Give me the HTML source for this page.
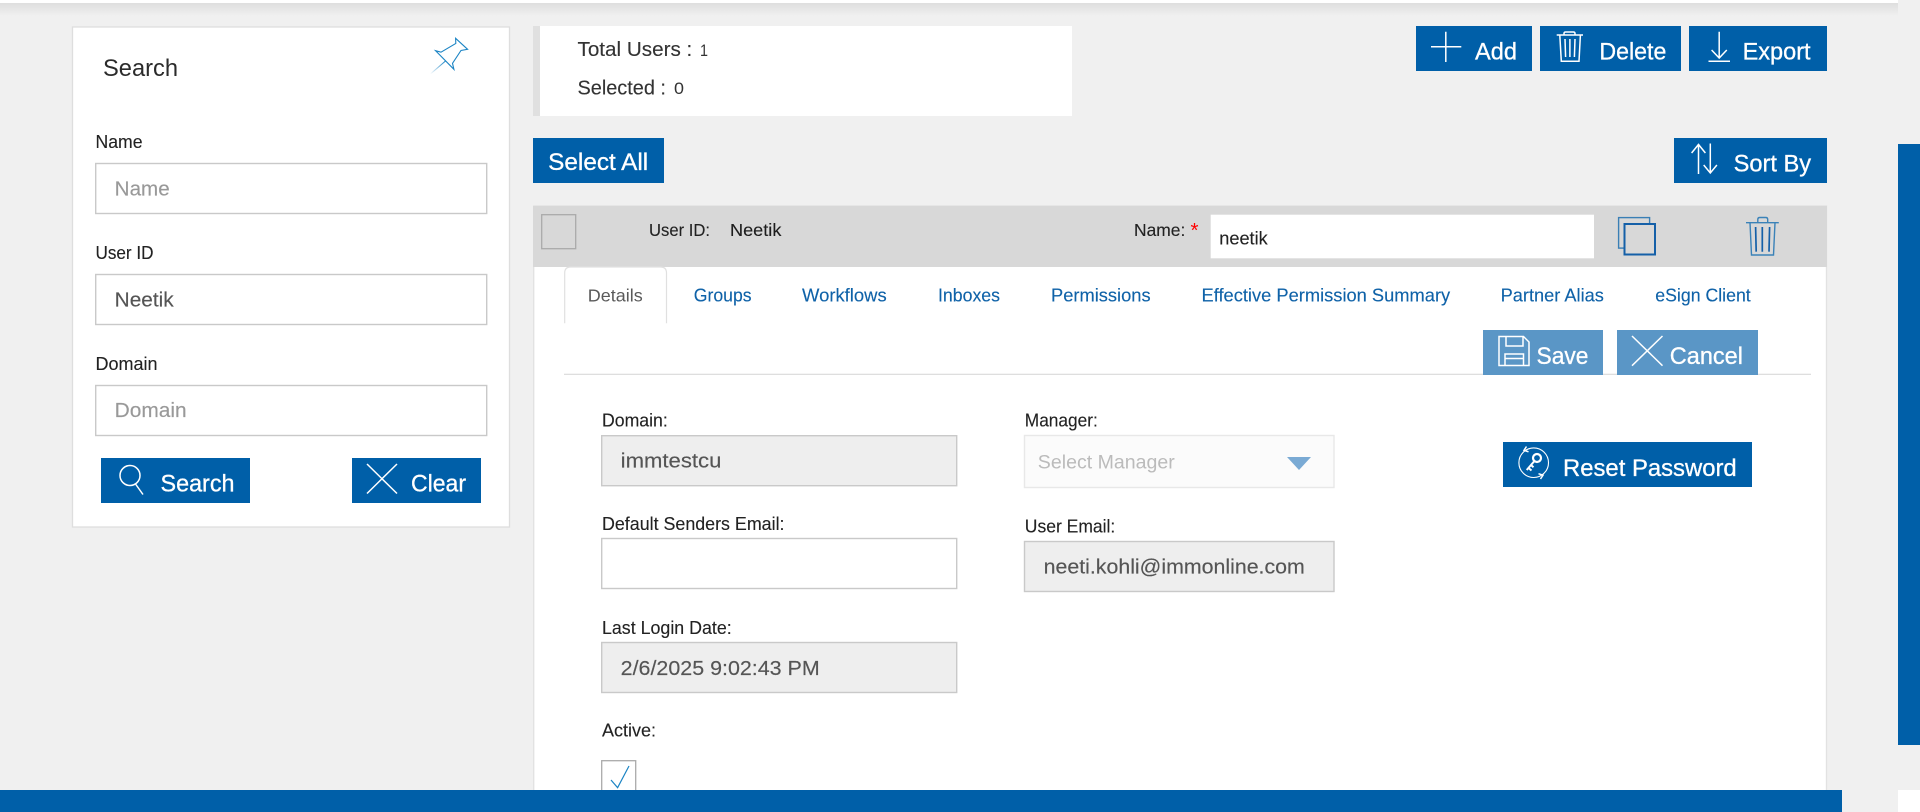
<!DOCTYPE html>
<html lang="en">
<head>
<meta charset="utf-8">
<title>Users</title>
<style>
html,body{margin:0;padding:0;width:1920px;height:812px;overflow:hidden;background:#f0f0f0}
svg{display:block}
text{font-family:"Liberation Sans",Arial,sans-serif;white-space:pre}
.l{font-size:18px;fill:#222;stroke:#222;stroke-width:.12}
.v{font-size:20px;fill:#555;stroke:#555;stroke-width:.15}
.ph{font-size:20px;fill:#999;stroke:#999;stroke-width:.15}
.b{font-size:24px;fill:#fff;stroke:#fff;stroke-width:.3}
.t{font-size:18px;fill:#0f62a8;stroke:#0f62a8;stroke-width:.12}
.i{fill:none;stroke:#fff;stroke-width:1.5}
.blue{fill:#005fa8}
.in{fill:#fff;stroke:#c9c9c9;stroke-width:1.4}
.dis{fill:#eee;stroke:#c9c9c9;stroke-width:1.4}
</style>
</head>
<body>
<svg xmlns="http://www.w3.org/2000/svg" width="1920" height="812" viewBox="0 0 1920 812">
<defs>
<linearGradient id="sh" x1="0" y1="0" x2="0" y2="1"><stop offset="0" stop-color="#dedede"/><stop offset="1" stop-color="#f0f0f0"/></linearGradient>
<linearGradient id="nd" x1="0" y1="1" x2="1" y2="0"><stop offset="0" stop-color="#1b84c4" stop-opacity="0"/><stop offset="1" stop-color="#1b84c4"/></linearGradient>
</defs>

<rect width="1920" height="812" fill="#f0f0f0"/>
<rect x="0" y="3" width="1898" height="13" fill="url(#sh)"/>
<rect x="0" y="0" width="1898" height="3" fill="#fff"/>

<!-- search card -->
<rect x="72.5" y="27" width="437" height="500" fill="#fff" stroke="#dedede" stroke-width="1.3"/>
<text x="103" y="76" font-size="24" fill="#2b2b2b" textLength="75" lengthAdjust="spacingAndGlyphs">Search</text>
<path d="M455.6 38.3L467.6 49.3L461 50.5L452.5 63.3L453.9 69.3L435.6 50.7L441 52.2L455.8 43.5Z" fill="none" stroke="#1b84c4" stroke-width="1.1"/>
<path d="M445.5 61L430.4 74" stroke="url(#nd)" stroke-width="1.1" fill="none"/>

<text class="l" x="95.5" y="148" textLength="47" lengthAdjust="spacingAndGlyphs">Name</text>
<rect class="in" x="95.7" y="163.5" width="391" height="50"/>
<text class="ph" x="114.7" y="195.5" textLength="55" lengthAdjust="spacingAndGlyphs">Name</text>

<text class="l" x="95.5" y="259" textLength="58" lengthAdjust="spacingAndGlyphs">User ID</text>
<rect class="in" x="95.7" y="274.5" width="391" height="50"/>
<text class="v" x="114.7" y="306.5" textLength="59" lengthAdjust="spacingAndGlyphs">Neetik</text>

<text class="l" x="95.5" y="370" textLength="62" lengthAdjust="spacingAndGlyphs">Domain</text>
<rect class="in" x="95.7" y="385.5" width="391" height="50"/>
<text class="ph" x="114.7" y="417" textLength="72" lengthAdjust="spacingAndGlyphs">Domain</text>

<rect class="blue" x="101" y="458" width="149" height="45"/>
<circle class="i" cx="130" cy="475.5" r="10"/>
<path class="i" d="M135.5 484L143 494.5"/>
<text class="b" x="160.5" y="491.7" textLength="74" lengthAdjust="spacingAndGlyphs">Search</text>

<rect class="blue" x="352" y="458" width="129" height="45"/>
<path class="i" d="M367 464L397 493.5M397 464L367 493.5"/>
<text class="b" x="411" y="491.7" textLength="55" lengthAdjust="spacingAndGlyphs">Clear</text>

<!-- totals -->
<rect x="533" y="26" width="539" height="90" fill="#fff"/>
<rect x="533" y="26" width="7" height="90" fill="#e0e0e0"/>
<text x="577.5" y="56" font-size="20" fill="#333" stroke="#333" stroke-width=".12" textLength="120.5" lengthAdjust="spacingAndGlyphs">Total Users : </text>
<text x="700" y="56" font-size="17" fill="#333" textLength="8" lengthAdjust="spacingAndGlyphs">1</text>
<text x="577.5" y="94.3" font-size="20" fill="#333" stroke="#333" stroke-width=".12" textLength="94" lengthAdjust="spacingAndGlyphs">Selected : </text>
<text x="674" y="94" font-size="17" fill="#333" textLength="10" lengthAdjust="spacingAndGlyphs">0</text>

<!-- action buttons -->
<rect class="blue" x="1416" y="26" width="116" height="45"/>
<path class="i" d="M1431 46.7H1461.3M1445.8 31.7V62"/>
<text class="b" x="1475" y="59.3" textLength="42" lengthAdjust="spacingAndGlyphs">Add</text>

<rect class="blue" x="1540" y="26" width="141" height="45"/>
<path class="i" d="M1556.7 35H1583M1564 35V33.5Q1564 32 1565.5 32H1573.5Q1575 32 1575 33.5V35M1559.8 35L1561.3 61.3H1579L1580.4 35M1565 39L1565.6 57M1569.9 39V57M1575 39L1574.4 57" stroke-width="1.2"/>
<text class="b" x="1599.4" y="59.3" textLength="67" lengthAdjust="spacingAndGlyphs">Delete</text>

<rect class="blue" x="1689" y="26" width="138" height="45"/>
<path class="i" d="M1719.2 31.7V58M1711.6 50L1719.2 58L1726.8 50M1708.5 61.3H1730"/>
<text class="b" x="1742.6" y="59.3" textLength="68" lengthAdjust="spacingAndGlyphs">Export</text>

<rect class="blue" x="533" y="138" width="131" height="45"/>
<text class="b" x="548.2" y="170" textLength="100" lengthAdjust="spacingAndGlyphs">Select All</text>

<rect class="blue" x="1674" y="138" width="153" height="45"/>
<path class="i" d="M1698.5 174V144M1691.6 153L1698.5 144.5L1705.4 153M1710.3 143.5V173.3M1703.7 165L1710.3 173L1716.9 165" stroke-width="1.7"/>
<text class="b" x="1733.6" y="171.7" textLength="77.5" lengthAdjust="spacingAndGlyphs">Sort By</text>

<!-- scrollbar / footer -->
<rect class="blue" x="1898" y="144" width="22" height="601"/>
<rect x="1898" y="790" width="22" height="22" fill="#fff"/>

<!-- row card -->
<rect x="533.7" y="206" width="1292.8" height="600" fill="#fff" stroke="#e2e2e2" stroke-width="1.3"/>
<rect x="533" y="206" width="1294" height="61" fill="#d8d8d8"/>
<rect x="541.7" y="214.7" width="34" height="34" fill="#d8d8d8" stroke="#aaa" stroke-width="1.3"/>
<text x="649" y="236" font-size="17.5" fill="#222" stroke="#222" stroke-width=".12" textLength="61" lengthAdjust="spacingAndGlyphs">User ID:</text>
<text x="730" y="236" font-size="17.5" fill="#1c1c1c" stroke="#1c1c1c" stroke-width=".12" textLength="51.4" lengthAdjust="spacingAndGlyphs">Neetik</text>
<text x="1134" y="236" font-size="17.5" fill="#222" stroke="#222" stroke-width=".12" textLength="51.3" lengthAdjust="spacingAndGlyphs">Name:</text>
<text x="1190.5" y="237" font-size="20" fill="#f00" textLength="8" lengthAdjust="spacingAndGlyphs">*</text>
<rect x="1210.7" y="214.7" width="383.3" height="43.6" fill="#fff"/>
<text x="1219.3" y="244.3" font-size="18.5" fill="#222" stroke="#222" stroke-width=".12" textLength="48.4" lengthAdjust="spacingAndGlyphs">neetik</text>

<rect x="1618.6" y="217.6" width="31" height="30.5" fill="none" stroke="#3a7fb5" stroke-width="1.4"/>
<rect x="1624.5" y="224" width="30.5" height="30.5" fill="#d8d8d8" stroke="#1560a8" stroke-width="2"/>

<path d="M1746 222.7H1778.8M1757.8 222.7V219.5Q1757.8 217.5 1759.8 217.5H1765.7Q1767.7 217.5 1767.7 219.5V222.7M1750 222.7L1751.5 255H1773.5L1775 222.7" fill="none" stroke="#3a82b8" stroke-width="1.4"/>
<path d="M1755.6 227L1756.2 251.7M1762.3 227V251.7M1769.6 227L1769 251.7" fill="none" stroke="#1560a8" stroke-width="1.7"/>

<!-- tabs -->
<path d="M564.7 323.3V273Q564.7 267 570.7 267H660.5Q666.5 267 666.5 273V323.3" fill="#fff" stroke="#e0e0e0" stroke-width="1.2"/>
<text x="587.8" y="301.7" font-size="17.5" fill="#5a5a5a" textLength="55" lengthAdjust="spacingAndGlyphs">Details</text>
<text class="t" x="693.8" y="301.7" textLength="57.8" lengthAdjust="spacingAndGlyphs">Groups</text>
<text class="t" x="802" y="301.7" textLength="84.7" lengthAdjust="spacingAndGlyphs">Workflows</text>
<text class="t" x="938" y="301.7" textLength="62" lengthAdjust="spacingAndGlyphs">Inboxes</text>
<text class="t" x="1051" y="301.7" textLength="99.6" lengthAdjust="spacingAndGlyphs">Permissions</text>
<text class="t" x="1201.5" y="301.7" textLength="248.7" lengthAdjust="spacingAndGlyphs">Effective Permission Summary</text>
<text class="t" x="1500.6" y="301.7" textLength="103.3" lengthAdjust="spacingAndGlyphs">Partner Alias</text>
<text class="t" x="1655.3" y="301.7" textLength="95.4" lengthAdjust="spacingAndGlyphs">eSign Client</text>

<rect x="564" y="373.7" width="1247" height="1.3" fill="#dedede"/>

<rect x="1483" y="330" width="120" height="45" fill="#5a96c6"/>
<path class="i" d="M1499 336.5H1523.5L1529 342V365.5H1499ZM1506 336.5V346H1523V337M1505 365.5V354H1523.5V365.5M1505 358.5H1523.5" stroke-width="1.2"/>
<text class="b" x="1536.5" y="364" textLength="52" lengthAdjust="spacingAndGlyphs">Save</text>

<rect x="1617" y="330" width="141" height="45" fill="#5a96c6"/>
<path class="i" d="M1632 336L1662.5 365.7M1662.5 336L1632 365.7"/>
<text class="b" x="1669.8" y="364" textLength="73.2" lengthAdjust="spacingAndGlyphs">Cancel</text>

<!-- form left -->
<text class="l" x="602" y="426.7" textLength="65.8" lengthAdjust="spacingAndGlyphs">Domain:</text>
<rect class="dis" x="601.7" y="435.7" width="355" height="50"/>
<text class="v" x="620.7" y="467.7" textLength="100.7" lengthAdjust="spacingAndGlyphs">immtestcu</text>

<text class="l" x="602" y="530" textLength="182.5" lengthAdjust="spacingAndGlyphs">Default Senders Email:</text>
<rect class="in" x="601.7" y="538.5" width="355" height="50"/>

<text class="l" x="602" y="634" textLength="129.7" lengthAdjust="spacingAndGlyphs">Last Login Date:</text>
<rect class="dis" x="601.7" y="642.5" width="355" height="50"/>
<text class="v" x="620.7" y="675" textLength="199" lengthAdjust="spacingAndGlyphs">2/6/2025 9:02:43 PM</text>

<text class="l" x="602" y="736.7" textLength="54" lengthAdjust="spacingAndGlyphs">Active:</text>
<rect x="601.7" y="760.7" width="34" height="40" fill="#fff" stroke="#aaa" stroke-width="1.3"/>
<path d="M611 780L617.6 787.7L629 766" fill="none" stroke="#1b84c4" stroke-width="1.2"/>

<!-- form middle -->
<text class="l" x="1024.8" y="426.7" textLength="73" lengthAdjust="spacingAndGlyphs">Manager:</text>
<rect x="1024.5" y="435.5" width="309.5" height="52" fill="#fbfbfb" stroke="#e8e8e8" stroke-width="1.4"/>
<text x="1037.8" y="468.7" font-size="19" fill="#bbb" textLength="137" lengthAdjust="spacingAndGlyphs">Select Manager</text>
<path d="M1287 457H1311L1299 470Z" fill="#7aaad4"/>

<text class="l" x="1024.8" y="532.7" textLength="90.5" lengthAdjust="spacingAndGlyphs">User Email:</text>
<rect class="dis" x="1024.5" y="541.5" width="309.5" height="50"/>
<text class="v" x="1043.6" y="573.3" textLength="261.2" lengthAdjust="spacingAndGlyphs">neeti.kohli@immonline.com</text>

<!-- reset -->
<rect class="blue" x="1503" y="442" width="249" height="45"/>
<circle cx="1533.7" cy="462.7" r="14.8" fill="none" stroke="#fff" stroke-width="1.1"/>
<path class="i" d="M1526.5 446.5L1524 450.3L1528.5 451.8M1540.5 479L1543 475.2L1538.5 473.7" stroke-width="1"/>
<circle cx="1537" cy="458" r="4" fill="none" stroke="#fff" stroke-width="2.2"/>
<path d="M1534 461.5L1526.7 470M1528.5 468L1531.5 470.5M1531 465L1533.5 467.2" fill="none" stroke="#fff" stroke-width="2"/>
<text class="b" x="1563" y="476" textLength="173.7" lengthAdjust="spacingAndGlyphs">Reset Password</text>

<rect class="blue" x="0" y="790" width="1842" height="22"/>
</svg>
</body>
</html>
